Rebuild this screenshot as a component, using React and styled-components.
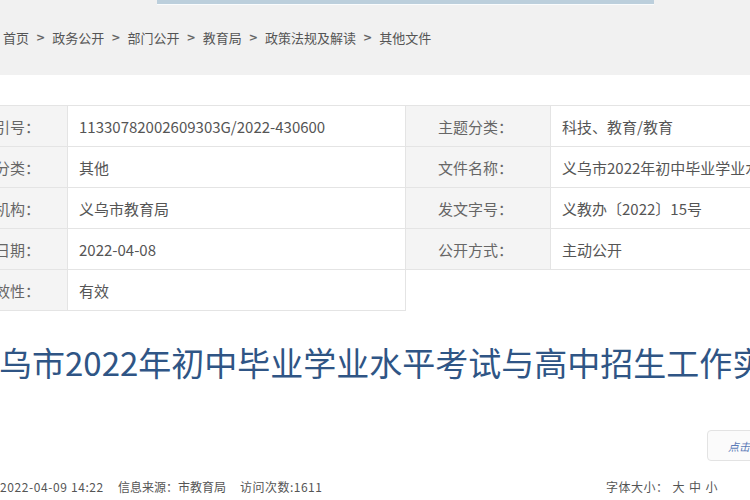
import React from 'react';
import styled, { createGlobalStyle } from 'styled-components';

const GlobalStyle = createGlobalStyle`
  html, body {
    margin: 0;
    padding: 0;
    background: #fff;
    overflow: hidden;
  }

  body {
    width: 750px;
    height: 500px;
    font-family: "Noto Sans CJK SC", "Noto Sans", sans-serif;
    color: #555;
  }
`;

const Page = styled.div`
  width: 750px;
  height: 500px;
  overflow: hidden;
  display: flex;
  flex-flow: column;
`;

const Masthead = styled.div`
  height: 75px;
  background: #f1f1f1;
  display: flex;
  flex-flow: column;
`;

const SearchEdge = styled.div`
  margin-left: 157px;
  width: 497px;
  height: 4px;
  background: #bccfdc;
  border-bottom: 1px solid #fafcfd;
`;

const Crumbs = styled.nav`
  display: flex;
  align-items: center;
  margin-top: 23px;
  padding-left: 3px;
  font-size: 13px;
  line-height: 20px;
  color: #555;
  white-space: nowrap;
`;

const CrumbSep = styled.span`
  margin: 0 7px;
  font-family: "DejaVu Sans", sans-serif;
  font-size: 11px;
  font-weight: bold;
  color: #666;
`;

const MetaTable = styled.div`
  margin-top: 30px;
  margin-left: -63px;
  display: grid;
  grid-template-columns: 130px 338px 145px 260px;
  grid-auto-rows: 41px;
  border-top: 1px solid #e4e4e4;
  border-left: 1px solid #e4e4e4;
`;

const Cell = styled.div`
  display: flex;
  align-items: center;
  border-right: 1px solid #e4e4e4;
  border-bottom: 1px solid #e4e4e4;
  font-size: 15px;
  white-space: nowrap;
  overflow: hidden;
`;

const Label = styled(Cell)`
  background: #f4f4f4;
  color: #666;
  justify-content: ${({ $side }) => ($side === 'left' ? 'flex-end' : 'flex-start')};
  padding: ${({ $side }) => ($side === 'left' ? '0 27px 0 0' : '0 0 0 32px')};
`;

const Value = styled(Cell)`
  background: #fff;
  color: #555;
  padding-left: 11px;
`;

const Title = styled.h1`
  margin: 31px 0 0 -34px;
  font-size: 33px;
  line-height: 40px;
  font-weight: normal;
  color: #2f5585;
  white-space: nowrap;
`;

const ToolRow = styled.div`
  margin-top: 48px;
  display: flex;
  justify-content: flex-end;
`;

const ListenButton = styled.button`
  flex: none;
  width: 64px;
  height: 31px;
  margin-right: -21px;
  border: 1px solid #e3e3e3;
  border-radius: 4px;
  background: #fbfbfb;
  color: #5b7bb8;
  font-family: inherit;
  font-size: 11px;
  font-style: italic;
  text-align: left;
  white-space: nowrap;
  overflow: hidden;
  padding: 0 0 0 20px;
`;

const InfoBar = styled.div`
  margin-top: 16px;
  display: flex;
  align-items: center;
  font-size: 12px;
  line-height: 20px;
  color: #555;
  white-space: nowrap;
`;

const InfoItem = styled.span`
  margin-left: ${({ $gap }) => $gap || 0}px;
  letter-spacing: ${({ $spread }) => $spread || 0}px;
`;

const FontSizes = styled.span`
  margin-left: auto;
  margin-right: 32px;
  letter-spacing: 0.5px;

  b {
    font-weight: normal;
    margin-left: 4px;
  }
`;

const rows = [
  ['索引号：', '11330782002609303G/2022-430600', '主题分类：', '科技、教育/教育'],
  ['组配分类：', '其他', '文件名称：', '义乌市2022年初中毕业学业水平考试与高中招生工作实施方案'],
  ['发布机构：', '义乌市教育局', '发文字号：', '义教办〔2022〕15号'],
  ['成文日期：', '2022-04-08', '公开方式：', '主动公开'],
  ['有效性：', '有效']
];

const crumbs = ['首页', '政务公开', '部门公开', '教育局', '政策法规及解读', '其他文件'];

export default function App () {
  return (
    <Page>
      <GlobalStyle />
      <Masthead>
        <SearchEdge />
        <Crumbs>
          {crumbs.map((c, i) => (
            <React.Fragment key={c}>
              {i > 0 && <CrumbSep>&gt;</CrumbSep>}
              <span>{c}</span>
            </React.Fragment>
          ))}
        </Crumbs>
      </Masthead>

      <MetaTable>
        {rows.map((r) => (
          <React.Fragment key={r[0]}>
            <Label $side='left'>{r[0]}</Label>
            <Value>{r[1]}</Value>
            {r[2] && <Label $side='right'>{r[2]}</Label>}
            {r[3] && <Value>{r[3]}</Value>}
          </React.Fragment>
        ))}
      </MetaTable>

      <Title>义乌市2022年初中毕业学业水平考试与高中招生工作实施方案</Title>

      <ToolRow>
        <ListenButton type='button'>点击收听</ListenButton>
      </ToolRow>

      <InfoBar>
        <InfoItem $spread={0.6}>2022-04-09 14:22</InfoItem>
        <InfoItem $gap={14}>信息来源：市教育局</InfoItem>
        <InfoItem $gap={14} $spread={0.5}>访问次数:1611</InfoItem>
        <FontSizes>
          字体大小：<b>大</b><b>中</b><b>小</b>
        </FontSizes>
      </InfoBar>
    </Page>
  );
}
